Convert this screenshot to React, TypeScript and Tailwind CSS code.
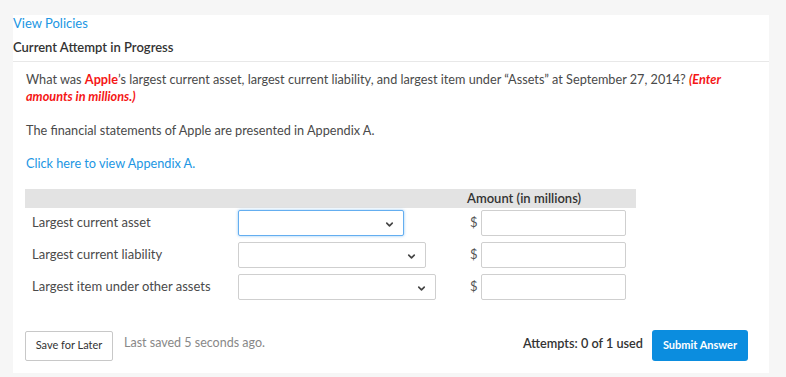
import { ChevronDown } from "lucide-react";

const rows = [
  { label: "Largest current asset", selectWidth: "w-[166px]", focused: true },
  { label: "Largest current liability", selectWidth: "w-[188px]", focused: false },
  { label: "Largest item under other assets", selectWidth: "w-[198px]", focused: false },
];

const SelectBox = ({ width, focused }: { width: string; focused: boolean }) => (
  <div
    className={`relative h-[26px] ${width} rounded-[2px] border bg-white ${
      focused
        ? "border-[#64aef0] shadow-[0_0_3px_rgba(100,174,240,0.7)]"
        : "border-[#cfcfcf]"
    }`}
  >
    <ChevronDown
      className="absolute right-[8px] top-[8px] text-[#444]"
      size={11}
      strokeWidth={3.5}
    />
  </div>
);

export default function App() {
  return (
    <div className="min-h-[377px] bg-[#f6f6f6] pl-[13px] pr-[17px] pt-[15px] pb-[4px] font-['Lato',sans-serif]">
      <div className="bg-white pb-[12px]">
        {/* Header */}
        <div className="border-b border-[#e8e8e8] pb-[5px]">
          <p className="text-[13px] leading-4 text-[#2196e3]">View Policies</p>
          <p className="mt-[7px] text-[13px] leading-[18px] font-semibold text-[#333]">
            Current Attempt in Progress
          </p>
        </div>

        {/* Question */}
        <div className="px-[13px] pt-[9px] text-[12.7px] leading-[17px] text-[#4a4a4a]">
          <p>
            What was <span className="font-bold text-[#f51616]">Apple</span>’s largest current
            asset, largest current liability, and largest item under “Assets” at September 27,
            2014?{" "}
            <span className="font-bold italic text-[#f51616]">(Enter amounts in millions.)</span>
          </p>
          <p className="mt-[17px]">The financial statements of Apple are presented in Appendix A.</p>
          <p className="mt-[16px] text-[#2196e3]">Click here to view Appendix A.</p>
        </div>

        {/* Table */}
        <div className="ml-[12px] mt-[17px] flex w-[611px] flex-col gap-[6px]">
          <div className="mb-[-4px] flex h-[19px] items-center bg-[#e3e3e3]">
            <span className="ml-[442px] text-[13px] font-semibold text-[#333]">
              Amount (in millions)
            </span>
          </div>
          {rows.map((row) => (
            <div key={row.label} className="flex h-[26px] items-center">
              <span className="w-[213px] pl-[7px] text-[13px] text-[#4a4a4a]">{row.label}</span>
              <div className="w-[232px]">
                <SelectBox width={row.selectWidth} focused={row.focused} />
              </div>
              <span className="w-[11px] text-[13px] text-[#555]">$</span>
              <div className="h-[26px] w-[145px] rounded-[2px] border border-[#cfcfcf] bg-white" />
            </div>
          ))}
        </div>

        {/* Footer */}
        <div className="mt-[30px] flex items-center pl-[12px] pr-[21px]">
          <button className="h-[30px] w-[88px] rounded-[2px] border border-[#c8c8c8] bg-white text-[11px] text-[#333]">
            Save for Later
          </button>
          <span className="ml-[11px] mb-[4px] text-[12.5px] text-[#888]">Last saved 5 seconds ago.</span>
          <span className="ml-auto mb-[4px] text-[12.7px] font-semibold text-[#333]">
            Attempts: 0 of 1 used
          </span>
          <button className="ml-[9px] h-[31px] w-[96px] rounded-[3px] bg-[#0b8ddf] text-[11px] font-bold text-white">
            Submit Answer
          </button>
        </div>
      </div>
    </div>
  );
}
